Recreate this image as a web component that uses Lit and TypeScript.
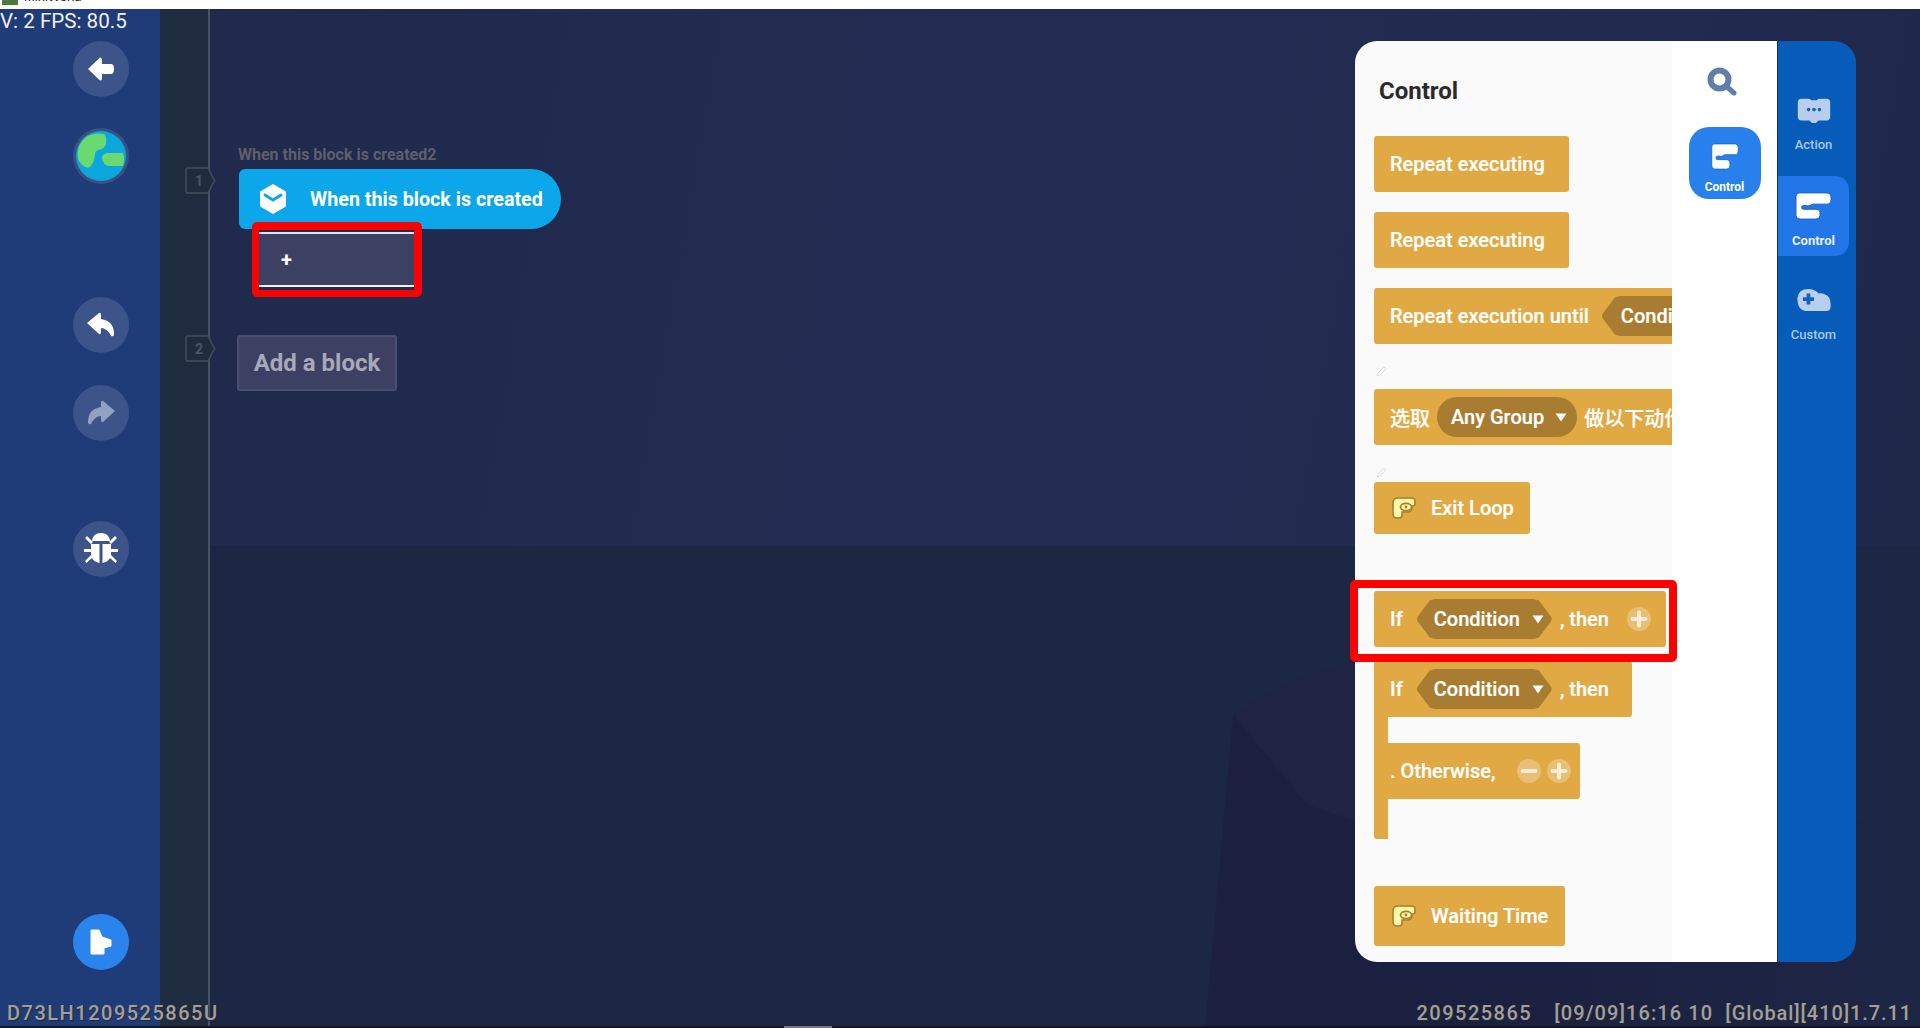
import { LitElement, html, css, svg } from "lit";
import { customElement } from "lit/decorators.js";

const controlPath = "M4 1H32Q36 1 36 5V8Q36 13 32 13H19Q17 13 15 14.5Q13 15.5 11 14.5H9Q6.5 14.5 6.5 16.5T9 18.5H21Q25 18.5 25 22V25Q25 29 21 29H5Q1 29 1 25V5Q1 1 4 1Z";

const controlIcon = (w: number, h: number) => html`<svg width=${w} height=${h} viewBox="0 0 37 30" preserveAspectRatio="none" style="display:block"><path d=${controlPath} fill="#fff" stroke="#1a62c8" stroke-width="1"/></svg>`;

const glyph = html`<svg class="glyph" width="24" height="22" viewBox="0 0 24 22"><path d="M6 1H19Q23 1 23 4V7Q23 9 20 9Q20 15 16 15H10V17Q10 21 7 21H5Q1 21 1 17V6Q1 1 6 1Z" fill="#fdf7a6" stroke="#a87c30" stroke-width="1.6"/><ellipse cx="14" cy="10" rx="5.5" ry="3.6" fill="#fdf7a6" stroke="#a87c30" stroke-width="1.6"/><circle cx="14" cy="10" r="1.4" fill="#a87c30"/></svg>`;

const chevron = html`<svg class="caret" width="12" height="9" viewBox="0 0 12 9"><path d="M0.5 0.5H11.5L6 8.5Z" fill="#fff"/></svg>`;

const roundBtn = (kind: "plus" | "minus") => html`<svg class="roundbtn" width="24" height="24" viewBox="0 0 24 24"><circle cx="12" cy="12" r="12" fill="#fff" fill-opacity=".26"/>${svg`<path d=${kind === "plus" ? "M12 5.5V18.5M5.5 12H18.5" : "M5.5 12H18.5"} stroke="#fff" stroke-opacity=".72" stroke-width="4" stroke-linecap="round"/>`}</svg>`;

const pencilIcon = html`<svg width="12" height="12" viewBox="0 0 12 12" style="display:block"><path d="M1 11L3 7L8 2L10 4L5 9Z" fill="none" stroke="#d4d4d4" stroke-width="1" stroke-dasharray="2 1"/></svg>`;

const hex = (label: string) => html`<span class="hex"><span>${label}</span>${chevron}</span>`;

@customElement("app-root")
export class AppRoot extends LitElement {
  static styles = css`
    :host { display: block; width: 1920px; height: 1028px; overflow: hidden; font-family: Roboto, "Noto Sans CJK SC", sans-serif; }
    .app { display: flex; flex-direction: column; height: 1028px; background: #1d2443; }
    .title { height: 9px; background: #fff; flex: none; overflow: hidden; display: flex; align-items: flex-start; gap: 6px; padding-left: 2px; font: 13px/13px "Liberation Sans", sans-serif; color: #222; }
    .title i { width: 16px; height: 5px; background: #4d7a3c; display: block; flex: none; }
    .title span { margin-top: -10px; display: block; }
    .body { flex: 1; display: flex; min-height: 0; position: relative; }
    .side { width: 160px; flex: none; background: #203c78; position: relative; display: flex; flex-direction: column; align-items: center; padding: 32px 0 0 42px; box-sizing: border-box; }
    .fps { position: absolute; left: 0; top: 1px; font-size: 20.6px; line-height: 23px; color: #eef0f6; white-space: nowrap; }
    .circle { width: 56px; height: 56px; border-radius: 50%; background: #3c548a; display: flex; align-items: center; justify-content: center; flex: none; }
    .circle svg { display: block; }
    .globe { margin-top: 31px; background: #3d5080; }
    .undo { margin-top: 113px; }
    .redo { margin-top: 32px; }
    .bug { margin-top: 80px; }
    .play { margin-top: auto; margin-bottom: 58px; background: #2a84ec; }
    .gutter { width: 50px; flex: none; background: #1f2c40; border-right: 2px solid #4a5360; box-sizing: border-box; padding: 158px 0 0 25px; display: flex; flex-direction: column; gap: 141px; position: relative; z-index: 2; }
    .tag { width: 31px; height: 27px; display: block; flex: none; }
    .canvas { flex: 1; position: relative; display: flex; justify-content: flex-end; padding: 32px 64px 0 0; box-sizing: border-box; background: linear-gradient(100deg, #1f2a4c 0%, #232b52 45%, #222a50 75%, #1e2848 100%); min-width: 0; }
    .sea { position: absolute; left: 0; right: 0; bottom: 0; height: 482px; display: block; }
    .work { position: absolute; left: 27px; top: 0; padding-top: 137px; display: flex; flex-direction: column; align-items: flex-start; z-index: 3; }
    .label { font-size: 16px; font-weight: 700; line-height: 18px; color: #5e5f6c; white-space: nowrap; margin-left: 1px; }
    .hat { margin: 5px 0 0 2px; width: 322px; height: 60px; box-sizing: border-box; background: #0ca6ea; border-radius: 6px 30px 30px 6px; display: flex; align-items: center; padding-left: 20px; gap: 23px; color: #fff; font-size: 19.7px; font-weight: 700; white-space: nowrap; }
    .mark { margin: -7px 0 0 15px; width: 170px; height: 75px; box-sizing: border-box; border: 8px solid #fe0000; border-width: 8px 8px 7px 7px; border-radius: 5px; background: #232a50; padding-top: 2px; position: relative; }
    .slot { height: 55px; box-sizing: border-box; background: #3c4062; border-top: 2px solid #e4e4ee; border-bottom: 2px solid #f4f4f8; color: #fff; font-size: 20px; font-weight: 700; display: flex; align-items: center; padding-left: 22px; }
    .add { margin: 38px 0 0 0; width: 160px; height: 56px; box-sizing: border-box; background: #3c4062; border: 2px solid #4a4f72; border-radius: 3px; color: #a7a9b8; font-size: 24px; font-weight: 700; display: flex; align-items: center; justify-content: center; }
    .panel { position: relative; display: flex; width: 501px; height: 921px; flex: none; }
    .list { width: 317px; flex: none; background: #fafafa; padding: 0 0 0 19px; box-sizing: border-box; display: flex; flex-direction: column; align-items: flex-start; border-radius: 22px 0 0 22px; }
    .head { font-size: 24px; font-weight: 700; color: #2a2a2c; line-height: 28px; margin: 36px 0 0 5px; height: 59px; flex: none; }
    .block { background: #e1a944; color: #fff; height: 56px; box-sizing: border-box; font-size: 20px; font-weight: 500; -webkit-text-stroke: 0.2px #fff; display: flex; align-items: center; padding-left: 16px; white-space: nowrap; border-radius: 3px; flex: none; }
    .block.s { margin-bottom: 20px; }
    .w195 { width: 195px; }
    .open { width: 298px; border-radius: 3px 0 0 3px; overflow: hidden; }
    .hex { background: #a87d32; height: 40px; display: inline-flex; align-items: center; gap: 12px; padding: 0 8px 0 17px; clip-path: polygon(0 50%, 1px 44%, 13px 4%, 18px 0, calc(100% - 18px) 0, calc(100% - 13px) 4%, calc(100% - 1px) 44%, 100% 50%, calc(100% - 1px) 56%, calc(100% - 13px) 96%, calc(100% - 18px) 100%, 18px 100%, 13px 96%, 1px 56%); flex: none; }
    .until { margin-left: 13px; padding-left: 19px; min-width: 120px; justify-content: flex-start; }
    .pill { background: #a87d32; height: 40px; border-radius: 20px; display: inline-flex; align-items: center; gap: 11px; padding: 0 10px 0 14px; margin: 0 7px; flex: none; }
    .pencil { display: block; flex: none; margin: 21px 0 12px 2px; }
    .pencil.b { margin-bottom: 4px; }
    .caret { display: block; }
    .glyph { display: block; margin: 0 15px 0 2px; flex: none; }
    .roundbtn { display: block; flex: none; }
    .ifline { width: 292px; margin-top: 57px; position: relative; }
    .ifline::after { content: ""; position: absolute; left: -24px; top: -11px; width: 327px; height: 82px; border: 8px solid #fe0000; border-radius: 5px; box-sizing: border-box; }
    .group { display: flex; flex-direction: column; align-items: flex-start; margin-top: 14px; background: linear-gradient(#e1a944, #e1a944) 0 0 / 14px 100% no-repeat; height: 178px; flex: none; border-radius: 0 0 3px 3px; }
    .ifs { width: 258px; }
    .else { width: 206px; margin-top: 26px; }
    .then { margin-left: 8px; }
    .gap18 { margin-left: 14px; }
    .wait { margin-top: 47px; height: 60px; width: 191px; }
    .exit { width: 156px; height: 52px; }
    .plusgap { margin-left: 18px; display: block; }
    .minusgap { margin-left: 22px; display: block; }
    .plusgap2 { margin-left: 6px; display: block; }
    .mid { width: 105px; flex: none; background: #fff; display: flex; flex-direction: column; align-items: center; padding: 26px 5px 0 0; box-sizing: border-box; }
    .search { display: block; flex: none; }
    .midcard { width: 72px; height: 72px; border-radius: 20px; background: #2880ec; margin: 30px 0 0 5px; color: #fff; font-size: 12px; font-weight: 700; display: flex; flex-direction: column; align-items: center; padding-top: 16px; box-sizing: border-box; gap: 10px; flex: none; line-height: 14px; }
    .right { flex: 1; background: #075bb9; border-left: 1px solid #0f3066; padding-top: 56px; box-sizing: border-box; display: flex; flex-direction: column; border-radius: 0 22px 22px 0; }
    .tab { width: 71px; display: flex; flex-direction: column; align-items: center; color: #a9c6ea; font-size: 13px; font-weight: 500; box-sizing: border-box; flex: none; line-height: 15px; }
    .tab.ac { height: 79px; gap: 13px; }
    .tab.on { height: 80px; background: #2276e8; color: #e8f1fd; border-radius: 0 14px 14px 0; padding-top: 16px; font-weight: 700; gap: 13px; }
    .tab.cu { margin-top: 32px; gap: 15px; }
    .tab svg { display: block; }
    .foot { position: absolute; left: 0; right: 0; bottom: 4px; z-index: 4; display: flex; justify-content: space-between; padding: 0 8px 0 7px; font-size: 20px; font-weight: 500; color: #a0a0a0; letter-spacing: 1.5px; line-height: 22px; text-shadow: 1px 1px 1px #2a2a2a; white-space: pre; pointer-events: none; }
    .foot .r { display: flex; gap: 22px; }
    .foot .r1 { letter-spacing: 1.1px; }
    .foot .r2 { letter-spacing: 0.9px; margin-left: -10px; }
    .strip { position: absolute; left: 0; right: 0; bottom: 0; height: 2px; background: #14161f; z-index: 4; }
    .handle { position: absolute; left: 784px; bottom: 0; width: 48px; height: 2px; background: #777; z-index: 5; }
  `;

  render() {
    return html`<div class="app">
      <div class="title"><i></i><span>MiniWorld</span></div>
      <div class="body">
        <div class="side">
          <div class="fps">V: 2 FPS: 80.5</div>
          <div class="circle"><svg width="30" height="28" viewBox="0 0 30 28"><path d="M14 2.5L2 14L14 25.5Q16 26 16 23V19H25Q28 19 28 14T25 9H16V5Q16 2 14 2.5Z" fill="#fff"/></svg></div>
          <div class="circle globe"><svg width="50" height="50" viewBox="0 0 50 50"><circle cx="25" cy="25" r="25" fill="#0ca6de"/><path d="M2 28Q0 14 10 6Q18 1 28 3Q31 5 30 13Q29 18 22 19Q19 20 19 24Q18 34 12 37Q5 35 2 28Z" fill="#6ad96f"/><path d="M26 27Q26 23 31 22H47Q49 28 47 35H33Q27 34 26 27Z" fill="#6ad96f"/></svg></div>
          <div class="circle undo"><svg width="30" height="26" viewBox="0 0 30 26"><path d="M13 1L1 11L13 22Q15 23 15 19V16Q21 16 25 24Q28 25 28 22Q28 9 15 7V3Q15 0 13 1Z" fill="#fff"/></svg></div>
          <div class="circle redo"><svg width="30" height="26" viewBox="0 0 30 26"><path d="M17 1L29 11L17 22Q15 23 15 19V16Q9 16 5 24Q2 25 2 22Q2 9 15 7V3Q15 0 17 1Z" fill="#8fa2c4"/></svg></div>
          <div class="circle bug"><svg width="34" height="34" viewBox="0 0 34 34"><path d="M8 9Q9 1 17 1T26 9Z" fill="#fff"/><path d="M7 12H15.5V31Q10 30 8 26L2.5 31L1 29L7 23V20H0V17H7ZM27 12H18.5V31Q24 30 26 26L31.5 31L33 29L27 23V20H34V17H27Z" fill="#fff"/><path d="M7 12L1 6L3 4L9 10M27 12L33 6L31 4L25 10" fill="#fff"/></svg></div>
          <div class="circle play"><svg width="22" height="26" viewBox="0 0 22 26"><path d="M1 1H9L12 8L21 11V17L14 19V25H1Z" fill="#fff" stroke="#fff" stroke-linejoin="round"/></svg></div>
        </div>
        <div class="gutter">
          ${["1", "2"].map((n) => html`<svg class="tag" viewBox="0 0 31 27"><path d="M2.5 1H23L29.5 13.5L23 26H2.5Q1 26 1 24.5V2.5Q1 1 2.5 1Z" fill="#1f2c40" stroke="#454d5b" stroke-width="1.6"/><text x="14" y="19" text-anchor="middle" font-family="Roboto" font-size="14" font-weight="700" fill="#4c5462">${n}</text></svg>`)}
        </div>
        <div class="canvas">
          <svg class="sea" viewBox="0 0 1710 482" preserveAspectRatio="none">
            <defs><linearGradient id="deep" gradientUnits="userSpaceOnUse" x1="1250" y1="0" x2="1710" y2="0"><stop offset="0" stop-color="#1c2040"/><stop offset="1" stop-color="#1e2645"/></linearGradient></defs>
            <rect width="1710" height="482" fill="#1c2744"/>
            <path d="M1023 168L1080 134L1145 114V274L1098 259Z" fill="#1f2443"/>
            <path d="M1023 168L995 482H1710V274L1142 274L1098 259Z" fill="url(#deep)"/>
          </svg>
          <div class="work">
            <div class="label">When this block is created2</div>
            <div class="hat"><svg width="28" height="30" viewBox="0 0 28 30"><path d="M14 1L26 8V22L14 29L2 22V8Z" fill="#fff" stroke="#fff" stroke-width="2" stroke-linejoin="round"/><path d="M6 11L14 16L22 11" fill="none" stroke="#0ca6ea" stroke-width="3" stroke-linecap="round"/></svg><span>When this block is created</span></div>
            <div class="mark"><div class="slot">+</div></div>
            <div class="add">Add a block</div>
          </div>
          <div class="panel">
            <div class="list">
              <div class="head">Control</div>
              <div class="block s w195">Repeat executing</div>
              <div class="block s w195">Repeat executing</div>
              <div class="block open">Repeat execution until<span class="hex until">Condition</span></div>
              <div class="pencil">${pencilIcon}</div>
              <div class="block open">选取<span class="pill">Any Group ${chevron}</span>做以下动作</div>
              <div class="pencil b">${pencilIcon}</div>
              <div class="block exit">${glyph}Exit Loop</div>
              <div class="block ifline">If<span class="gap18">${hex("Condition")}</span><span class="then">, then</span><span class="plusgap">${roundBtn("plus")}</span></div>
              <div class="group">
                <div class="block ifs">If<span class="gap18">${hex("Condition")}</span><span class="then">, then</span></div>
                <div class="block else">. Otherwise,<span class="minusgap">${roundBtn("minus")}</span><span class="plusgap2">${roundBtn("plus")}</span></div>
              </div>
              <div class="block wait">${glyph}Waiting Time</div>
            </div>
            <div class="mid">
              <svg class="search" width="30" height="30" viewBox="0 0 30 30"><circle cx="12.5" cy="12.5" r="9" fill="none" stroke="#5f7fa6" stroke-width="6"/><path d="M19 19L27 26" stroke="#5f7fa6" stroke-width="5" stroke-linecap="round"/></svg>
              <div class="midcard">${controlIcon(28, 27)}<span>Control</span></div>
            </div>
            <div class="right">
              <div class="tab ac"><svg width="36" height="27" viewBox="0 0 38 30"><path d="M5 2H12Q15 2 16 3.5H22Q23 2 26 2H33Q37 2 37 6V22Q37 26 33 26H24Q22 29 19 29T14 26H5Q1 26 1 22V6Q1 2 5 2Z" fill="#b6cfee"/><circle cx="13" cy="14" r="2" fill="#175fb8"/><circle cx="19" cy="14" r="2" fill="#175fb8"/><circle cx="25" cy="14" r="2" fill="#175fb8"/></svg><span>Action</span></div>
              <div class="tab on">${controlIcon(37, 28)}<span>Control</span></div>
              <div class="tab cu"><svg width="36" height="24" viewBox="0 0 38 26"><path d="M1 11Q2 1 13 1Q20 1 24 6Q27 5 31 7Q37 9 37 17V20Q37 25 32 25H12Q1 25 1 11Z" fill="#b6cfee"/><path d="M13 6V18M7 12H19" stroke="#175fb8" stroke-width="4"/></svg><span>Custom</span></div>
            </div>
          </div>
        </div>
        <div class="foot"><span>D73LH1209525865U</span><span class="r"><span>209525865</span><span class="r1">[09/09]16:16 10</span><span class="r2">[Global][410]1.7.11</span></span></div>
        <div class="strip"></div>
        <div class="handle"></div>
      </div>
    </div>`;
  }
}
